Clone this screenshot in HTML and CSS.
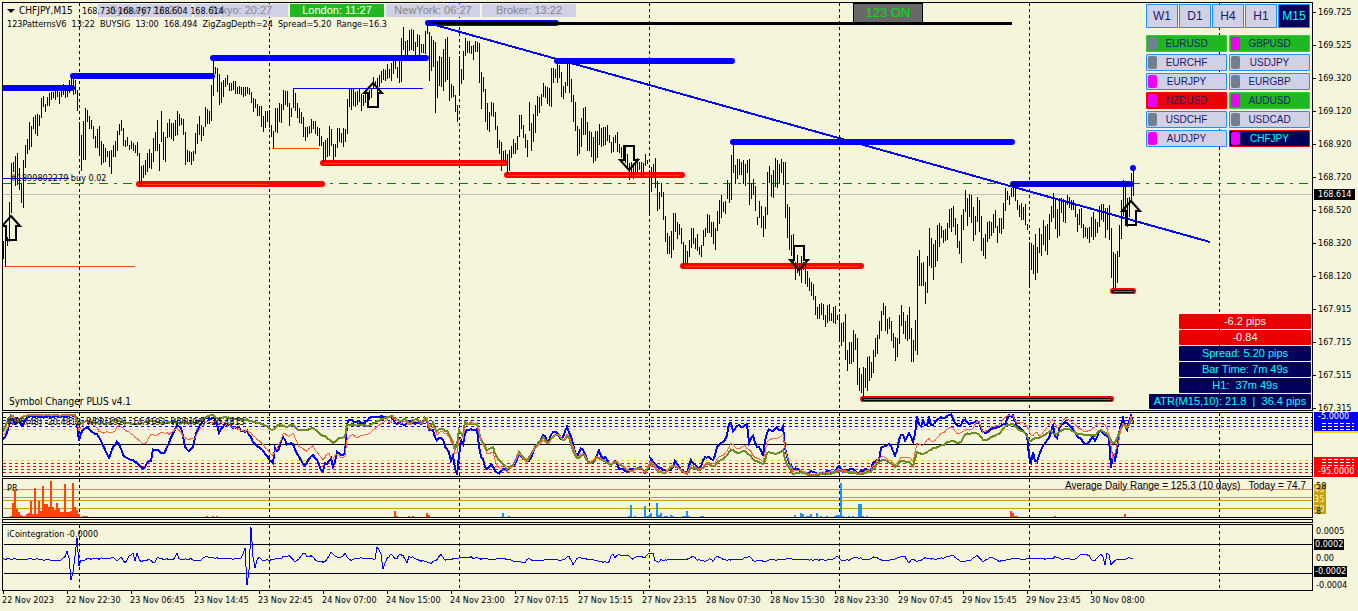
FILE: index.html
```html
<!DOCTYPE html>
<html lang="en">
<head>
<meta charset="utf-8">
<title>CHFJPY,M15</title>
<link rel="stylesheet" href="styles.css">
</head>
<body>
<main class="terminal">
  <section class="panel price-panel">
    <svg class="plot" id="price" viewBox="3 3 1309 407" preserveAspectRatio="none"></svg>
    <span class="order-label">#1899802279 buy 0.02</span>
    <span class="version-label">Symbol Changer PLUS v4.1</span>
    <div class="sessions">
      <span class="session">Sydney: 22:27</span>
      <span class="session">Tokyo: 20:27</span>
      <span class="session session-open">London: 11:27</span>
      <span class="session">NewYork: 06:27</span>
      <span class="session">Broker: 13:22</span>
    </div>
    <header class="chart-head">
      <div class="head-row">
        <svg class="caret" viewBox="0 0 8 4"><path d="M0 0h8L4 4z"/></svg>
        <span class="symbol">CHFJPY,M15</span>
        <span>168.730 168.767 168.604 168.614</span>
      </div>
      <div class="head-note">123PatternsV6  13:22  BUYSIG  13:00  168.494  ZigZagDepth=24  Spread=5.20  Range=16.3</div>
    </header>
    <button class="pattern-toggle" type="button">123 ON</button>
    <div class="switcher">
      <div class="frames">
        <button class="key" type="button">W1</button>
        <button class="key" type="button">D1</button>
        <button class="key" type="button">H4</button>
        <button class="key" type="button">H1</button>
        <button class="key key-active" type="button">M15</button>
      </div>
      <div class="pairs">
        <button class="pair up" type="button"><i class="mark"></i>EURUSD</button>
        <button class="pair up" type="button"><i class="mark hot"></i>GBPUSD</button>
        <button class="pair" type="button"><i class="mark"></i>EURCHF</button>
        <button class="pair" type="button"><i class="mark"></i>USDJPY</button>
        <button class="pair" type="button"><i class="mark hot"></i>EURJPY</button>
        <button class="pair" type="button"><i class="mark"></i>EURGBP</button>
        <button class="pair down" type="button"><i class="mark hot"></i>NZDUSD</button>
        <button class="pair up" type="button"><i class="mark hot"></i>AUDUSD</button>
        <button class="pair" type="button"><i class="mark"></i>USDCHF</button>
        <button class="pair" type="button"><i class="mark"></i>USDCAD</button>
        <button class="pair" type="button"><i class="mark hot"></i>AUDJPY</button>
        <button class="pair current" type="button"><i class="mark hot"></i>CHFJPY</button>
      </div>
    </div>
    <div class="stats">
      <span class="stat loss">-6.2 pips</span>
      <span class="stat loss">-0.84</span>
      <span class="stat">Spread: 5.20 pips</span>
      <span class="stat">Bar Time: 7m 49s</span>
      <span class="stat">H1:  37m 49s</span>
      <span class="stat stat-wide">ATR(M15,10): 21.8  |  36.4 pips</span>
    </div>
  </section>
  <div class="axis price-axis">
    <span>169.725</span><span>169.525</span><span>169.320</span><span>169.120</span><span>168.920</span><span>168.720</span><span>168.520</span><span>168.320</span><span>168.120</span><span>167.915</span><span>167.715</span><span>167.515</span><span>167.315</span>
    <b class="tag bid">168.614</b>
  </div>

  <section class="panel">
    <svg class="plot" id="wpr" viewBox="3 413 1309 63" preserveAspectRatio="none"></svg>
    <span class="panel-label">WPR(48) -20.4813  WPR(192) -14.9193  WPR(96) -20.4813</span>
  </section>
  <div class="axis wpr-axis">
    <div class="zone zone-top">-5.0000</div>
    <div class="zone zone-bottom">-95.0000</div>
  </div>

  <section class="panel">
    <svg class="plot" id="pr" viewBox="3 479 1309 38" preserveAspectRatio="none"></svg>
    <span class="panel-label">PR</span>
    <span class="range-label">Average Daily Range = 125.3 (10 days)   Today = 74.7</span>
  </section>
  <div class="axis pr-axis">
    <div class="levels"><span>45</span><span>35</span><span>20</span></div>
    <span class="pr-max">58</span>
    <span class="pr-min">8</span>
  </div>

  <section class="panel"></section>
  <div></div>

  <section class="panel">
    <svg class="plot" id="coint" viewBox="3 525 1309 65" preserveAspectRatio="none"></svg>
    <span class="panel-label">iCointegration -0.0000</span>
  </section>
  <div class="axis coint-axis">
    <span>0.0005</span><b class="tag">0.0002</b><span>0.00</span><b class="tag">-0.0002</b><span>-0.0004</span>
  </div>

  <footer class="times">
    <span>22 Nov 2023</span><span>22 Nov 22:30</span><span>23 Nov 06:45</span><span>23 Nov 14:45</span><span>23 Nov 22:45</span><span>24 Nov 07:00</span><span>24 Nov 15:00</span><span>24 Nov 23:00</span><span>27 Nov 07:15</span><span>27 Nov 15:15</span><span>27 Nov 23:15</span><span>28 Nov 07:30</span><span>28 Nov 15:30</span><span>28 Nov 23:30</span><span>29 Nov 07:45</span><span>29 Nov 15:45</span><span>29 Nov 23:45</span><span>30 Nov 08:00</span>
  </footer>
</main>
<script src="chart.js"></script>
</body>
</html>
```

FILE: styles.css
```css
* { box-sizing: border-box; }

body {
  margin: 0;
  background: #f5f5dc;
  color: #000;
  font: 9px/12px "DejaVu Sans Condensed", "DejaVu Sans", sans-serif;
}

button { margin: 0; padding: 0; font: inherit; }

.terminal {
  display: grid;
  grid-template-columns: minmax(0, 1fr) 45px;
  grid-template-rows: minmax(409px, 1fr) 65px 40px 4px 67px 19px;
  row-gap: 1px;
  min-height: 100vh;
  padding: 2px 0 0 2px;
}

.panel { position: relative; border: 1px solid #000; }
.plot { display: block; position: absolute; inset: 0; width: 100%; height: 100%; }
.plot .crisp { shape-rendering: crispEdges; }

.chart-head { position: absolute; top: 1px; left: 4px; white-space: nowrap; }
.head-row { display: flex; align-items: center; gap: 4px; height: 13px; }
.caret { width: 8px; height: 4px; }
.symbol { width: 59px; font-size: 10px; }
.head-note { line-height: 14px; white-space: pre; }

.sessions {
  position: absolute;
  top: 1px;
  left: 95px;
  display: flex;
  gap: 2px;
  font: 11px/13px "Liberation Sans", Arial, sans-serif;
}
.session { width: 94px; background: #d0d0e6; color: #868686; text-align: center; }
.session-open { background: #20b820; color: #fff; }

.pattern-toggle {
  position: absolute;
  top: 0;
  left: 65%;
  width: 70px;
  height: 20px;
  margin-left: -1px;
  border: 1px solid #000;
  background: #696969;
  color: #00e000;
  font: 13px/18px "Liberation Sans", Arial, sans-serif;
}

.order-label { position: absolute; top: 41.5%; left: 7px; }
.version-label {
  position: absolute;
  bottom: 1px;
  left: 6px;
  font-size: 10px;
  line-height: 14px;
}
.panel-label { position: absolute; top: 3px; left: 4px; white-space: pre; }
.range-label {
  position: absolute;
  top: 0;
  right: 6px;
  font: 10px/14px "Liberation Sans", Arial, sans-serif;
  white-space: pre;
}

.switcher {
  position: absolute;
  top: 1px;
  right: 2px;
  width: 164px;
  font-family: "Liberation Sans", Arial, sans-serif;
}
.frames { display: grid; grid-template-columns: repeat(5, 1fr); gap: 1px; margin-bottom: 7px; }
.key {
  height: 24px;
  border: 1px solid #1e90ff;
  background: #d0d0e6;
  color: #191970;
  font-size: 12px;
}
.key-active { background: #00005a; color: #00ffff; }
.pairs { display: grid; grid-template-columns: 1fr 1fr; gap: 2px; }
.pair {
  display: flex;
  align-items: center;
  justify-content: center;
  position: relative;
  height: 17px;
  border: 1px solid #1e90ff;
  border-radius: 1px;
  background: #d0d0e6;
  color: #191970;
  font-size: 10px;
}
.up { border-color: #32cd32; background: #20b820; }
.down { border-color: #ff0000; background: #eb0000; }
.current { border-color: #ff0000; background: #00005a; color: #00ffff; }
.mark {
  position: absolute;
  top: 1px;
  left: 1px;
  width: 9px;
  height: 13px;
  border-radius: 2px;
  background: #708090;
}
.hot { background: #f000f0; }

.stats {
  position: absolute;
  right: 1px;
  bottom: 1px;
  display: flex;
  flex-direction: column;
  align-items: flex-end;
  gap: 1px;
  font: 11px/15px "Liberation Sans", Arial, sans-serif;
  white-space: pre;
}
.stat { width: 132px; border-radius: 1px; background: #00005a; color: #00ffff; text-align: center; }
.stat-wide { width: 162px; }
.loss { background: #eb0000; color: #fff; }

.axis { position: relative; padding-left: 5px; }
.price-axis {
  display: flex;
  flex-direction: column;
  justify-content: space-between;
  padding-top: 4px;
  margin-bottom: -3px;
}
.price-axis span::before {
  content: "";
  float: left;
  width: 3px;
  height: 1px;
  margin: 6px 2px 0 -5px;
  background: #000;
}
.tag { padding: 0 2px; background: #000; color: #fff; font-weight: normal; line-height: 11px; }
.bid { position: absolute; top: 45.5%; left: 1px; width: 41px; padding-left: 4px; }

.wpr-axis { display: flex; flex-direction: column; justify-content: space-between; padding-left: 1px; }
.zone { height: 20px; padding-left: 4px; color: #fff; }
.zone-top {
  height: 21px;
  border-bottom: 2px solid #ffd700;
  background:
    repeating-linear-gradient(90deg, transparent 0 4px, #0000ff 4px 6px) 8px 10px / 32px 8px no-repeat,
    repeating-linear-gradient(#ffffff 0 1px, #0000ff 1px 3px) 8px 11px / 32px 7px no-repeat,
    #0000ff;
  line-height: 9px;
}
.zone-bottom {
  background:
    repeating-linear-gradient(90deg, transparent 0 4px, #ff0000 4px 6px) 8px 2px / 32px 8px no-repeat,
    repeating-linear-gradient(#ffffff 0 1px, #ff0000 1px 3px) 8px 2px / 32px 7px no-repeat,
    #ff0000;
  padding-top: 9px;
  line-height: 11px;
}

.pr-axis { padding: 6px 0 0 1px; }
.levels { display: flex; flex-direction: column; width: 12px; background: #c8a000; color: #f5f5dc; line-height: 10px; }
.pr-max, .pr-min { position: absolute; left: 3px; line-height: 12px; }
.pr-max { top: 2px; }
.pr-min { bottom: 1px; }

.coint-axis { display: flex; flex-direction: column; align-items: flex-start; gap: 2px; padding: 1px 0 0 3px; }
.coint-axis .tag { padding: 0 1px; margin-left: -2px; }

.times { display: grid; grid-template-columns: repeat(18, 64fr) 159fr; white-space: nowrap; }
.times span { line-height: 16px; position: relative; }
.times span::before { content: ""; position: absolute; top: -1px; left: 1px; width: 1px; height: 3px; background: #000; }
```

FILE: chart.js
```js
const NS = 'http://www.w3.org/2000/svg';

function add(svg, tag, attrs) {
  const el = document.createElementNS(NS, tag);
  for (const key in attrs) el.setAttribute(key, attrs[key]);
  svg.appendChild(el);
  return el;
}
function hline(svg, x1, x2, y, color, height = 1) {
  add(svg, 'rect', { x: x1, y, width: x2 - x1, height, fill: color, class: 'crisp' });
}
function dashed(svg, x1, y1, x2, y2, color, pattern) {
  add(svg, 'line', { x1, y1, x2, y2, stroke: color, 'stroke-dasharray': pattern, class: 'crisp' });
}
const DAYS = [79, 269, 459, 649, 839, 1029, 1219];
function dayLines(svg, top, bottom) {
  DAYS.forEach(x => dashed(svg, x + 0.5, top, x + 0.5, bottom, '#000', '3 3'));
}

/* High and low of each bar, in thirds of a chart unit, two units apart. */
const bars = `
723 777,720 800,711 738,606 726,488 640,485 515,467 558,458 555,505 570,549 608,480 624,435 505,417 462,365 450,378 440,350 387,345 403,342 408,345 378,295 355,288 320,312 335,290 318,280 318,275 300,275 295,262 300,262 290,275 312,265 292,252 285,262 295,270 290,240 278,235 265,228 285,240 282,270 333,365 460,405 512,362 480,323 480,330 367,348 387,360 387,378 417,408 444,387 445,378 468,423 495,432 490,443 487,453 472,453 500,450 522,435 470,423 470,393 452,372 405,360 393,383 437,420 440,410 437,435 450,423 447,430 453,434 460,426 467,460 553,498 554,495 535,480 525,460 515,447 505,460 507,413 487,396 453,360 453,432 513,333 425,395 480,410 485,368 415,358 412,370 417,368 423,360 408,333 405,343 378,353 375,358 405,396 495,450 487,453 487,457 495,453 483,398 462,372 432,348 405,375 422,382 408,320 382,327 373,333 373,255 363,172 288,200 222,204 275,222 315,245 308,240 290,234 260,225 255,250 272,250 272,243 270,243 283,262 282,258 282,260 285,262 290,260 287,260 283,265 285,275 310,294 335,297 324,312 347,318 347,318 380,347 395,333 385,333 365,330 385,375 412,393 445,323 395,325 400,310 367,312 370,270 330,273 315,273 320,308 378,325 350,265 325,280 332,308 355,325 370,
337 372,352 410,380 423,380 412,378 403,357 400,362 387,362 403,380 408,385 437,408 437,427 490,420 482,415 470,378 468,388 437,432 483,432 472,383 443,385 425,398 430,385 440,388 425,297 402,265 320,268 330,265 318,275 322,273 315,265 307,282 332,285 318,282 308,285 310,270 300,265 295,230 268,243 262,235 282,225 262,212 250,207 240,210 243,192 238,208 235,190 243,168 222,172 208,200 235,183 248,113 245,82 150,123 180,120 172,90 152,87 150,90 152,125 177,102 140,105 168,132 160,132 160,93 162,75 103,95 243,108 213,120 200,125 338,183 293,168 258,170 260,147 273,117 245,112 240,170 302,253 293,258 290,285 335,315 367,168 280,207 252,153 240,115 168,123 160,123 160,137 163,135 180,122 155,125 157,130 248,217 327,232 275,267 367,308 390,337 395,305 347,310 350,335 390,378 445,420 462,425 513,453 487,450 490,462 525,450 513,438 475,417 462,430 462,408 450,345 412,345 387,375 415,402 443,420 470,305 393,370 453,343 427,315 400,288 348,290 340,283 317,248 290,258 293,262 312,265 318,205 322,203 248,207 235,185 248,195 235,215 290,258 298,245 278,190 257,185 280,238 305,285 365,305 392,378 467,388 462,355 440,323 405,320 405,365 453,393 453,395 470,412 488,393 482,392 475,372 435,
385 440,380 438,382 435,375 423,405 430,425 458,410 455,405 428,395 457,432 460,440 473,438 480,440 490,462 505,490 540,485 535,490 538,478 520,475 520,487 510,485 530,490 530,462 498,480 492,510 643,500 575,492 535,475 565,542 633,577 627,550 590,575 660,648 725,700 762,708 762,692 773,640 750,638 695,665 717,672 705,683 732,725 800,735 795,753 793,720 772,683 745,683 732,715 747,702 753,740 765,735 770,690 738,683 712,642 700,645 700,665 710,665 732,683 750,633 693,600 672,585 653,605 635,603 642,540 597,552 608,465 600,425 520,495 552,477 538,477 525,487 525,480 552,493 558,480 520,477 615,550 597,537 585,558 633,652 675,602 655,618 683,648 710,622 687,515 645,498 550,525 592,510 595,473 562,480 565,492 548,477 520,487 555,487 655,612 713,620 750,705 767,702 790,785 840,765 820,790 828,768 850,785 810,785 852,813 860,833 872,847 887,852 900,888 945,920 957,912 957,910 945,913 960,945 980,915 970,913 963,938 963,922 970,918 972,945 960,943 1022,970 1038,965 1025,943 1080,1050 1112,1027 1092,1027 1092,990 1087,1002 1050,1015 1155,1103 1172,1123 1180,1102 1200,1105 1165,1072 1172,1068 1142,1087 1133,1050 1118,1015 1070,1005 1062,962 1018,
933 993,908 945,918 993,958 1002,950 987,963 1022,1000 1043,1010 1082,1013 1072,945 1032,915 977,937 1003,963 1018,945 1022,920 1017,983 1085,1020 1087,960 1052,768 1065,750 857,788 857,787 857,847 912,768 878,683 798,713 805,733 840,720 802,675 783,670 740,678 713,690 728,688 723,670 720,627 685,623 695,618 680,653 705,673 743,723 762,645 788,627 690,570 635,595 677,582 652,585 670,622 723,648 705,592 667,600 697,647 752,713 768,702 777,665 725,662 717,667 707,642 700,630 683,678 728,653 700,653 703,608 687,563 633,573 600,588 615,563 590,558 590,557 603,600 630,615 652,608 660,622 660,612 675,673 690,725 857,728 810,735 822,702 840,740 820,683 760,702 768,660 735,677 752,672 765,642 720,618 665,578 653,595 687,627 715,595 708,593 638,597 665,600 670,585 615,592 625,600 630,600 630,612 652,643 697,627 675,625 685,672 713,680 712,683 717,680 730,652 712,635 720,658 712,665 698,618 680,612 660,612 665,623 715,623 690,615 720,683 833,755 875,762 865,753 848,675 770,600 717,540 648,557 645,595 680,590 650,520 610,503 588
`.trim().split(/,\s*/).map(bar => bar.split(' ').map(v => Math.round(v / 3)));

const price = document.getElementById('price');
dayLines(price, 3, 410);
hline(price, 3, 1312, 194, '#c0c0c0');
dashed(price, 3, 183.5, 1312, 183.5, '#008000', '9 6 3 6');
hline(price, 3, 69, 178, '#0000ff');
hline(price, 293, 423, 88, '#0000ff');

function zone(x1, x2, y, color, inner) {
  add(price, 'line', { x1, y1: y, x2, y2: y, stroke: color, 'stroke-width': 6, 'stroke-linecap': 'round' });
  if (inner) hline(price, x1, inner, y, '#ff4500');
}
[[3, 72, 88], [73, 212, 76], [213, 426, 58], [428, 556, 23], [557, 732, 61], [733, 1012, 142], [1013, 1131, 184]]
  .forEach(([a, b, y]) => zone(a, b, y, '#0000ff'));
[[139, 322, 184, 269], [323, 505, 163, 505], [507, 682, 175, 680], [683, 861, 266, 858], [1113, 1133, 291], [863, 1111, 399]]
  .forEach(([a, b, y, c]) => zone(a, b, y, '#ff0000', c));
hline(price, 5, 135, 266, '#ff4500');
hline(price, 272, 319, 148, '#ff4500');
hline(price, 428, 1012, 22, '#000', 3);
[[1012, 1132, 183, '#0000c0'], [1112, 1134, 290, '#ff4500'], [862, 1112, 398, '#ff4500']].forEach(([a, b, y, core]) => {
  hline(price, a, b, y, '#000', 3);
  hline(price, a + 1, b - 1, y + 1, core);
});
add(price, 'line', { x1: 428, y1: 23, x2: 1210, y2: 242, stroke: '#0000ff', 'stroke-width': 2, class: 'crisp' });
add(price, 'circle', { cx: 1133, cy: 168, r: 3, fill: '#0000ff' });
add(price, 'path', {
  class: 'crisp',
  d: bars.map(([hi, lo], i) => `M${3 + 2 * i} ${hi}h1V${lo}h-1z`).join('')
});
function arrow(x, y, dir) {
  add(price, 'path', {
    d: `M${x} ${y}l9 ${10 * dir}h-4v${14 * dir}h-10v${-14 * dir}h-4z`,
    fill: 'none', stroke: '#000', 'stroke-width': 2
  });
}
arrow(11, 216, 1); arrow(373, 83, 1); arrow(1131, 201, 1);
arrow(629, 170, -1); arrow(799, 270, -1);

/* Resamples a curve on the two-unit bar grid, with a small ripple. */
function curve(svg, text, color, width, ripple) {
  const pts = text.trim().split(/\s+/).map(p => p.split(',').map(Number));
  let seed = 7, k = 0, d = '';
  for (let x = 3; x <= pts[pts.length - 1][0]; x += 2) {
    while (k < pts.length - 2 && pts[k + 1][0] < x) k++;
    const [x1, y1] = pts[k], [x2, y2] = pts[k + 1];
    seed = (seed * 16807) % 2147483647;
    const y = y1 + (y2 - y1) * (x - x1) / (x2 - x1) + (seed / 2147483647 - 0.5) * 2 * ripple;
    d += `${d ? 'L' : 'M'}${x} ${y.toFixed(1)}`;
  }
  add(svg, 'path', { d, fill: 'none', stroke: color, 'stroke-width': width, class: 'crisp' });
}

const wpr = document.getElementById('wpr');
[417, 420, 423, 426].forEach(y => dashed(wpr, 3, y + 0.5, 1312, y + 0.5, '#0000ff', '3 3'));
[429, 460].forEach(y => dashed(wpr, 3, y + 0.5, 1312, y + 0.5, '#ffd700', '3 3'));
[463, 466, 469, 472].forEach(y => dashed(wpr, 3, y + 0.5, 1312, y + 0.5, '#ff0000', '3 3'));
hline(wpr, 3, 1312, 444, '#000');
dayLines(wpr, 413, 476);
curve(wpr, `3,440 8,431 11,416 15,424 19,420 22,427 26,418 31,416 38,417 60,416 75,416 77,424 79,440 82,430 86,427 90,430 95,434 99,436 101,442 103,446 106,452 109,457 113,448 117,442 120,446 123,455 128,459 133,460 138,463 141,467 144,469 147,462 151,461 153,450 158,450 162,454 166,450 170,440 174,432 178,424 182,430 185,448 190,452 193,446 196,432 200,424 205,418 210,420 215,418 219,432 225,424 235,428 248,432 252,440 258,447 263,451 268,458 273,463 275,448 278,454 281,440 284,437 288,446 292,441 296,451 300,458 304,467 308,460 313,455 317,460 321,470 323,471 326,460 328,467 330,455 334,471 336,450 340,454 345,454 347,424 350,419 355,422 358,420 361,424 366,422 370,417 390,417 393,419 396,425 399,422 402,424 406,424 410,419 414,424 418,422 422,424 426,417 429,431 433,431 436,440 440,438 443,440 446,450 448,449 451,460 453,456 456,474 458,474 460,438 463,445 466,429 477,430 480,455 483,460 486,471 491,464 494,468 498,475 502,470 507,470 512,466 516,462 519,453 524,459 528,462 532,457 534,448 540,441 544,433 548,443 552,431 558,433 562,440 567,427 571,436 574,448 577,457 582,447 586,457 590,464 595,460 599,450 602,458 606,457 610,466 615,461 619,468 624,470 628,472 632,468 636,470 640,467 645,472 650,468 651,458 656,466 662,469 668,471 672,470 675,460 679,467 682,470 687,473 691,461 696,466 700,470 704,457 710,457 714,462 716,448 720,443 726,440 730,418 733,431 738,424 742,427 747,424 749,443 753,435 757,448 760,448 763,455 766,433 769,430 773,432 777,427 780,433 783,426 785,448 788,462 793,469 797,468 802,472 807,474 812,470 818,474 824,474 828,470 833,473 839,467 843,472 848,470 852,469 856,473 860,472 865,469 870,472 874,461 879,460 881,448 885,447 889,443 892,448 896,457 899,440 902,433 906,442 908,431 911,437 914,443 917,416 920,428 923,420 926,428 929,418 932,427 936,420 940,417 944,418 951,415 955,423 960,427 964,417 968,424 974,423 978,419 981,429 984,434 990,430 1000,426 1005,424 1009,415 1013,416 1017,427 1022,429 1027,435 1030,467 1033,453 1036,466 1040,452 1045,443 1050,437 1053,424 1056,443 1060,426 1066,422 1072,427 1077,435 1084,443 1088,444 1092,436 1096,441 1100,430 1105,434 1109,438 1111,468 1113,455 1116,462 1119,432 1123,418 1127,430 1131,415 1134,427`, '#0000ff', 2, 1);
curve(wpr, `3,432 8,420 12,414 16,422 24,416 30,415 75,415 79,424 85,421 95,423 105,424 115,420 125,423 140,424 150,420 160,423 172,422 185,423 195,422 208,417 212,415 218,419 225,417 235,419 248,420 258,423 266,426 272,430 279,425 288,427 292,424 299,430 307,430 314,428 320,434 326,437 333,443 340,437 345,437 347,425 360,425 368,426 375,422 383,419 392,416 400,422 405,418 410,424 416,418 423,423 426,416 429,428 433,423 436,431 442,429 448,432 452,440 456,451 459,430 463,437 465,422 470,424 477,424 481,440 487,450 493,447 497,458 503,465 508,470 514,463 519,452 527,461 534,449 543,437 548,443 553,436 559,434 564,442 568,434 573,450 578,460 583,454 590,464 597,457 603,460 611,465 616,462 624,467 630,472 640,468 646,472 651,462 658,472 665,473 674,465 680,469 687,474 692,467 700,471 707,463 714,467 718,461 725,458 731,449 738,453 744,450 749,455 757,462 764,464 767,452 774,454 780,453 783,450 786,464 793,474 800,472 810,475 830,474 840,471 850,473 862,474 872,471 880,461 886,460 896,467 901,461 908,461 913,466 917,452 924,454 932,449 942,445 952,441 960,443 965,434 978,433 984,441 990,438 1000,433 1006,425 1013,424 1018,430 1024,431 1030,442 1034,439 1042,437 1050,431 1056,435 1064,429 1070,429 1076,433 1086,435 1096,435 1101,430 1108,434 1112,443 1116,442 1120,430 1124,423 1128,428 1132,418 1134,425`, '#6b8e23', 2, 0.7);
curve(wpr, `3,436 8,428 12,415 16,420 24,415 74,415 79,430 85,421 95,426 102,434 108,431 114,433 118,425 125,430 132,434 140,441 144,445 148,439 151,434 156,436 162,432 170,434 178,428 184,438 190,440 195,437 200,427 206,422 212,424 218,420 228,425 240,430 248,431 254,436 262,444 268,451 273,455 278,447 284,432 289,437 293,432 299,446 306,451 313,446 319,455 324,460 328,451 332,461 336,452 340,457 345,457 347,440 352,434 357,437 363,436 370,433 376,427 383,423 388,418 390,427 393,416 400,424 405,420 410,425 416,420 423,424 427,418 430,432 434,426 437,434 442,432 448,435 453,444 456,458 459,440 463,438 466,424 470,422 477,424 482,444 487,454 493,452 497,466 503,471 508,472 514,464 519,453 527,462 534,450 543,440 548,444 553,436 559,434 564,442 568,432 573,446 578,458 583,453 590,462 597,456 603,459 611,464 616,461 624,466 630,472 640,469 646,472 651,460 658,471 665,472 674,464 680,469 687,473 692,465 700,470 707,462 714,465 718,457 725,454 731,443 738,449 744,445 749,450 757,459 763,461 767,441 774,439 780,438 783,434 786,455 793,471 800,470 810,474 830,472 840,470 850,472 862,473 872,468 880,457 886,458 896,465 901,458 908,456 913,461 917,443 924,445 928,438 933,442 940,434 952,427 958,434 964,430 972,430 978,419 983,433 990,428 1000,424 1006,416 1012,415 1017,424 1022,421 1028,428 1032,438 1036,432 1040,437 1048,426 1053,419 1058,430 1064,419 1070,420 1076,425 1082,431 1090,430 1098,424 1106,424 1110,440 1113,459 1116,449 1119,440 1122,422 1128,430 1131,416 1134,426`, '#ff6347', 1, 1);

const pr = document.getElementById('pr');
dayLines(pr, 479, 517);
[489, 497, 500, 508].forEach(y => hline(pr, 3, 1312, y, '#c8a000'));
function histogram(text, color) {
  text.trim().split(/\s+/).forEach(p => {
    const [x, top] = p.split(',').map(Number);
    add(pr, 'rect', { x, y: top, width: 2, height: 517 - top, fill: color, class: 'crisp' });
  });
}
histogram(`10,516 12,503 14,490 16,509 18,512 20,515 22,516 24,516 26,514 28,513 30,501 32,514 34,488 36,514 38,501 40,511 42,486 44,504 46,504 48,507 50,481 52,507 54,510 56,503 58,508 60,512 62,512 64,484 66,512 68,512 70,511 72,483 74,507 76,510 78,514 82,516 84,516 86,516 206,516 212,516 216,516 394,511 396,516 408,516 412,516 426,513 428,515 1010,511 1012,513 1014,516 1016,516 1054,516 1124,514`, '#ff4500');
histogram(`502,513 508,516 628,516 630,505 634,516 644,506 646,516 648,516 650,513 656,503 658,515 660,513 664,516 666,516 670,515 672,516 682,516 684,516 686,511 688,516 700,516 702,516 794,515 800,513 802,514 806,516 808,516 810,514 816,513 820,516 826,516 834,516 836,515 838,515 840,483 842,516 848,516 852,516 858,504 860,504 862,516 866,516`, '#1e90ff');

const coint = document.getElementById('coint');
dayLines(coint, 525, 590);
hline(coint, 4, 1312, 544, '#000');
hline(coint, 4, 1312, 573, '#000');
curve(coint, `3,559 30,559 60,560 65,557 67,551 69,558 71,581 73,572 75,556 77,538 79,565 81,560 90,559 114,558 118,562 120,556 125,563 130,555 133,553 135,560 137,553 140,562 145,560 150,559 154,564 157,558 174,560 177,554 180,560 190,559 200,560 204,557 210,558 240,559 243,554 245,547 247,586 249,570 251,528 253,556 255,568 258,556 262,561 275,559 280,559 285,556 290,556 295,561 300,558 304,552 308,557 312,556 317,561 325,562 331,553 336,556 340,557 345,554 350,561 355,558 375,559 377,547 380,551 381,555 383,569 386,560 391,554 396,560 400,554 403,555 407,562 409,556 414,558 425,562 431,564 437,559 441,555 445,560 460,558 470,557 480,559 500,559 525,562 528,558 533,561 550,559 566,560 568,554 573,564 577,558 590,559 605,562 609,562 612,553 616,559 618,553 622,556 627,555 632,559 638,557 645,557 650,553 653,553 655,561 658,563 661,560 680,559 690,559 693,556 697,560 705,561 712,558 713,562 716,556 720,557 725,560 740,559 749,557 755,561 775,560 800,559 825,560 834,559 838,556 840,561 850,560 857,557 865,560 875,557 883,561 890,560 905,556 909,563 912,558 917,561 925,558 935,559 953,556 961,561 970,561 977,555 983,562 990,557 1000,561 1010,559 1020,559 1050,559 1055,557 1062,560 1068,558 1074,560 1080,555 1088,554 1093,561 1098,558 1102,553 1105,564 1107,553 1109,555 1111,565 1115,560 1125,559 1133,558`, '#0000ff', 1, 0.8);
```
